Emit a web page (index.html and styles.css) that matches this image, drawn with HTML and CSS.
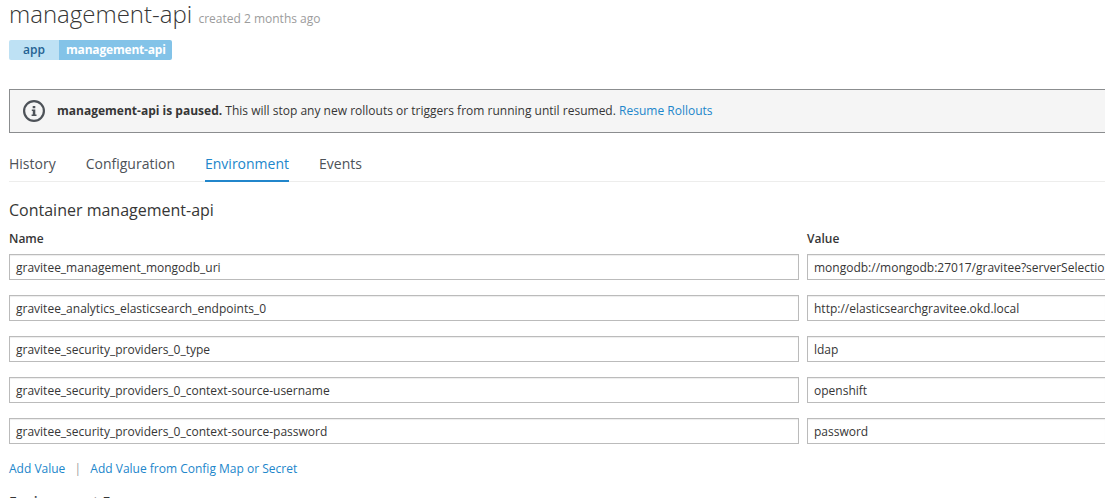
FILE: index.html
```html
<!DOCTYPE html>
<html lang="en">
<head>
<meta charset="utf-8">
<title>management-api</title>
<link rel="stylesheet" href="styles.css">
</head>
<body>
<main class="page">
  <h1 class="title"><span class="title-name">management-api</span> <small class="title-meta">created 2 months ago</small></h1>
  <div class="label"><span class="label-key">app</span><span class="label-value">management-api</span></div>
  <div class="alert">
    <svg class="alert-icon" viewBox="0 0 24 24"><circle cx="12" cy="12" r="9.9" fill="none" stroke="#4d5258" stroke-width="2.2"/><path fill="#4d5258" d="M10.7 7h2.6v2.2h-2.6zM9.8 10.4h3.5v5h1.2v1.6H9.6v-1.6h1.2V12h-1z"/></svg>
    <p class="alert-text"><strong>management-api is paused.</strong> <span class="alert-copy">This will stop any new rollouts or triggers from running until resumed.</span> <a class="link">Resume Rollouts</a></p>
  </div>
  <nav class="tabs"><a class="tab">History</a><a class="tab">Configuration</a><a class="tab tab-active">Environment</a><a class="tab">Events</a></nav>
  <h3 class="section-title">Container management-api</h3>
  <div class="row head"><span>Name</span><span>Value</span></div>
  <div class="rows">
    <div class="row"><div class="field">gravitee_management_mongodb_uri</div><div class="field field-value">mongodb://mongodb:27017/gravitee?serverSelectio</div></div>
    <div class="row"><div class="field">gravitee_analytics_elasticsearch_endpoints_0</div><div class="field field-value">http://elasticsearchgravitee.okd.local</div></div>
    <div class="row"><div class="field">gravitee_security_providers_0_type</div><div class="field field-value">ldap</div></div>
    <div class="row"><div class="field">gravitee_security_providers_0_context-source-username</div><div class="field field-value">openshift</div></div>
    <div class="row"><div class="field">gravitee_security_providers_0_context-source-password</div><div class="field field-value">password</div></div>
  </div>
  <div class="actions"><a class="link">Add Value</a><span class="divider">|</span><a class="link">Add Value from Config Map or Secret</a></div>
  <h4 class="from-title">Environment From <svg class="help-icon" viewBox="0 0 12 12"><circle cx="6" cy="6" r="5.4" fill="none" stroke="#8b8d8f"/></svg></h4>
</main>
</body>
</html>
```

FILE: styles.css
```css
* { box-sizing: border-box; }
body { margin: 0; background: #fff; color: #363636; font: 12px/20px "Open Sans", sans-serif; overflow: hidden; }
.page { height: 498px; overflow: hidden; padding-left: 9px; }
h1, h3, h4, p { margin: 0; font-weight: 400; }
.title { height: 40px; line-height: 28px; white-space: nowrap; }
.title-name { font-size: 24px; font-weight: 300; }
.title-meta { font-size: 12px; color: #9c9c9c; }
.label { display: flex; height: 20px; font-weight: 600; }
.label-key { width: 50px; text-align: center; background: #bee1f4; color: #246192; border-radius: 2px 0 0 2px; }
.label-value { width: 113px; padding-left: 7px; white-space: nowrap; background: #83c3e8; color: #fff; font-weight: 700; letter-spacing: -.19px; border-radius: 0 2px 2px 0; }
.alert { display: flex; align-items: center; height: 44px; margin-top: 29px; padding-left: 12px; background: #f5f5f5; border: 1px solid #8b8d8f; border-right: 0; }
.alert-icon { width: 24px; height: 24px; margin-right: 11px; }
.alert-text { letter-spacing: .006px; }
.link { color: #2186cb; }
.tabs { display: flex; gap: 30px; height: 49px; padding-top: 16px; border-bottom: 1px solid #ededec; font-size: 14px; line-height: 30px; color: #4d5258; }
.tab { height: 33px; }
.tab-active { color: #2186cb; border-bottom: 2px solid #2186cb; }
.section-title { margin-top: 18px; font-size: 16px; line-height: 20px; }
.row { display: grid; grid-template-columns: 790px minmax(0, 1fr); gap: 8px; }
.head { margin-top: 9px; font-weight: 600; }
.rows { display: grid; gap: 15px; margin-top: 5px; }
.field { height: 26px; padding: 3px 6px 1px; border: 1px solid #bbb; box-shadow: inset 0 1px 1px rgba(3, 3, 3, .075); white-space: nowrap; overflow: hidden; }
.field-value { padding-right: 0; border-right: 0; }
.actions { display: flex; margin-top: 15px; }
.divider { width: 25px; text-align: center; color: #9c9c9c; }
.from-title { margin-top: 13px; font-size: 14px; font-weight: 600; line-height: 20px; letter-spacing: .2px; white-space: nowrap; }
.help-icon { width: 12px; height: 12px; vertical-align: -3px; margin-left: 0; }
```
